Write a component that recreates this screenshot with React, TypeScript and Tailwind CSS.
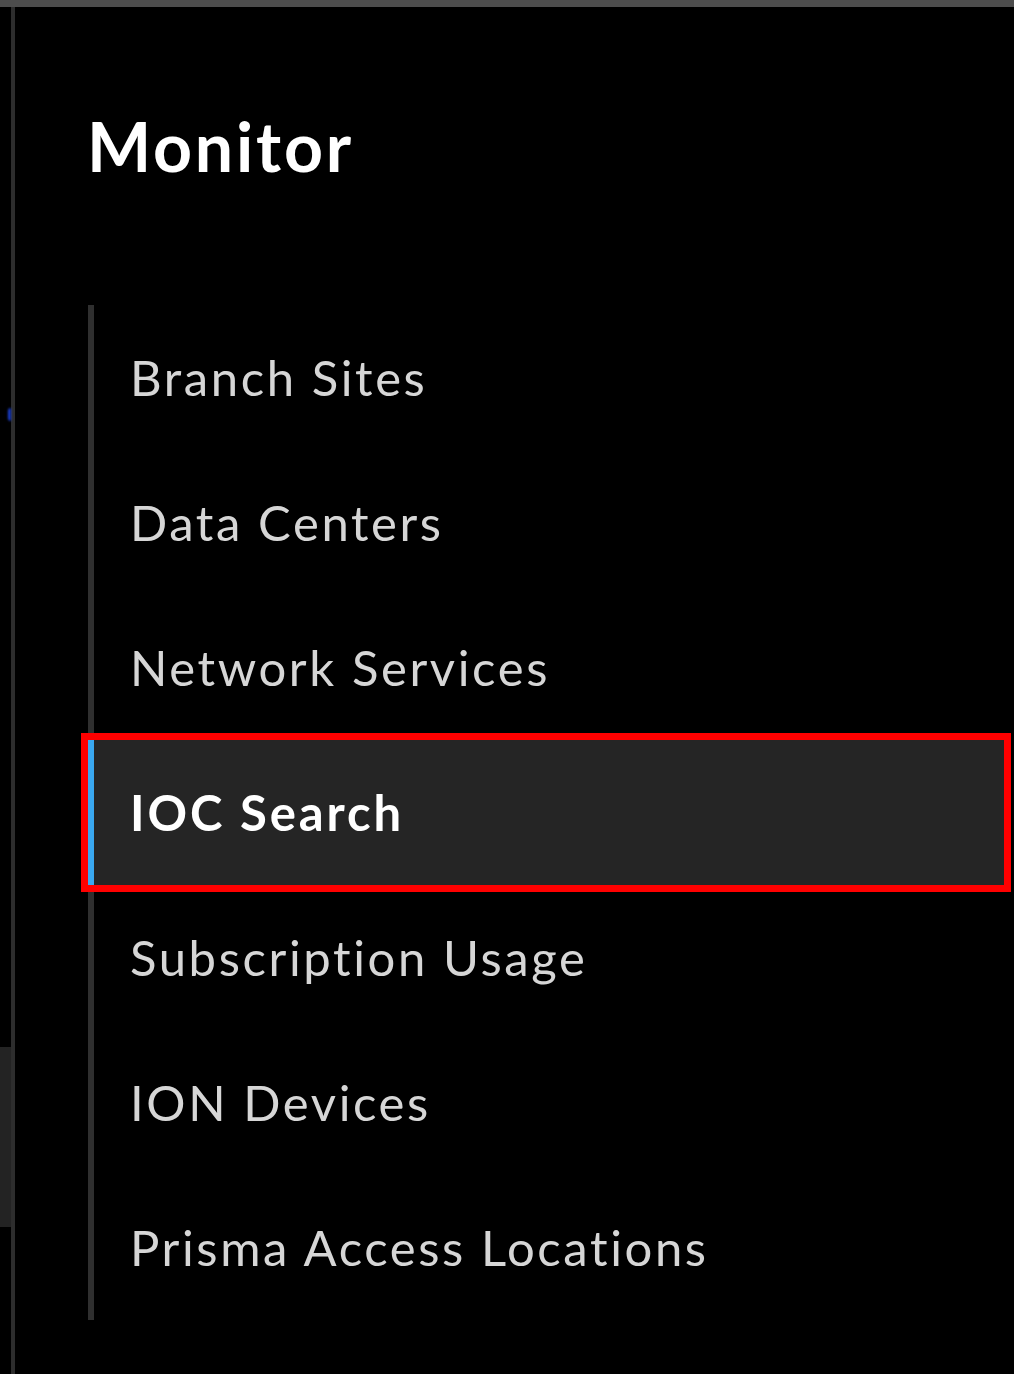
const items = [
  'Branch Sites',
  'Data Centers',
  'Network Services',
  'IOC Search',
  'Subscription Usage',
  'ION Devices',
  'Prisma Access Locations',
];

const selected = 'IOC Search';

function NavItem({ label }: { label: string }) {
  const active = label === selected;
  return (
    <div
      className={
        active
          ? '-ml-[6px] flex h-[145px] items-center border-l-[6px] border-[#3aa8f0] bg-[#252525] pl-[36px] text-[49px] tracking-[2.9px] font-bold text-white outline-[7px] outline-solid outline-[#ff0000]'
          : '-ml-[6px] flex h-[145px] items-center border-l-[6px] border-transparent pl-[36px] text-[49px] tracking-[2.6px] text-[#d6d6d6]'
      }
    >
      {label}
    </div>
  );
}

export default function App() {
  return (
    <div className="flex h-[1374px] w-[1014px] flex-col overflow-hidden bg-black font-['Lato','Liberation_Sans',sans-serif]">
      <div className="h-[7px] shrink-0 bg-[#4d4d4d]" />
      <div className="flex flex-1">
        <div className="flex w-[11px] flex-col">
          <div className="mt-[401px] ml-[8px] h-[13px] w-[3px] rounded-l-full bg-[#1b3fcf] blur-[1px]" />
          <div className="mt-[626px] h-[180px] bg-[#232323]" />
        </div>
        <div className="w-[4px] bg-[#2d2d2d]" />
        <div className="flex flex-1 flex-col pl-[73px]">
          <h1 className="mt-[105px] -ml-[1px] text-[68px] leading-[1] font-bold tracking-[2.8px] text-white">Monitor</h1>
          <nav className="mt-[125px] w-[916px] border-l-[6px] border-[#2f2f2f]">
            {items.map((label) => (
              <NavItem key={label} label={label} />
            ))}
          </nav>
        </div>
      </div>
    </div>
  );
}
